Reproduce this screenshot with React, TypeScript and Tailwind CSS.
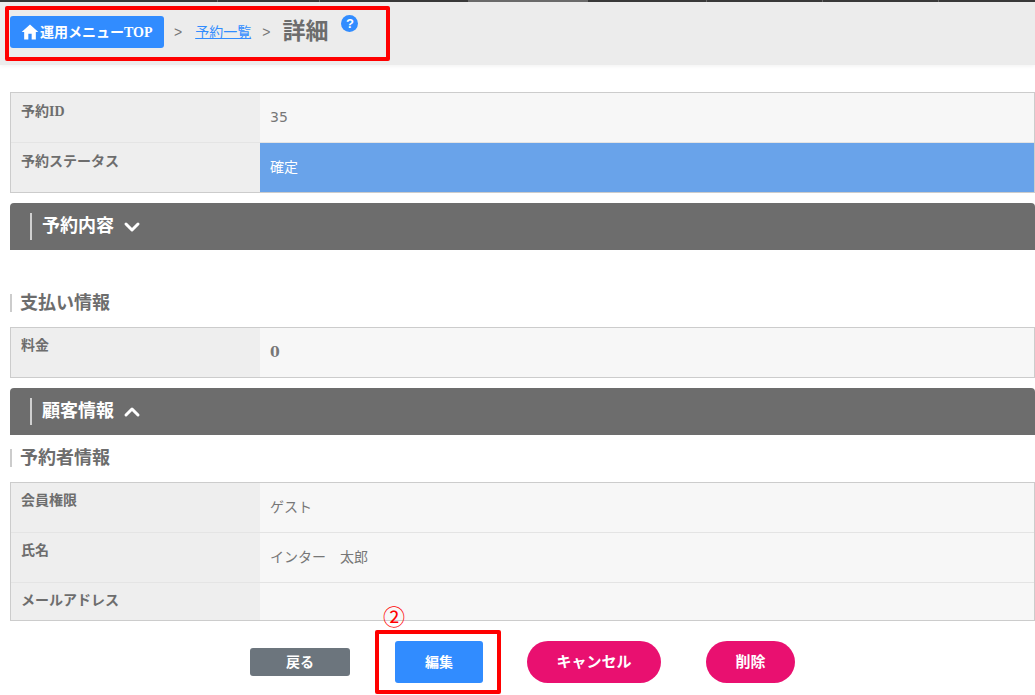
import { ChevronDown, ChevronUp } from 'lucide-react'

const jp = "font-['Liberation_Sans','Noto_Sans_CJK_JP',sans-serif]"
const serif = "font-['Liberation_Serif','Noto_Sans_CJK_JP',serif]"

function Row({ label, value, active, height = 'h-[50px]', bold, labelPad = 'pt-[8px]' }: { label: string; value?: string; active?: boolean; height?: string; bold?: boolean; labelPad?: string }) {
  return (
    <div className={`flex ${height} border-b border-[#e4e4e4] last:border-b-0`}>
      <div className={`w-[249px] shrink-0 bg-[#eeeeee] pl-[10px] ${labelPad} text-[14px] leading-[20px] font-bold text-[#6d6d6d] ${serif}`}>{label}</div>
      <div className={`flex-1 pl-[10px] pt-[14px] leading-[20px] ${active ? 'bg-[#69a3ea] text-white' : 'bg-[#f7f7f7] text-[#777777]'} ${bold ? "font-bold text-[14px] font-['DejaVu_Serif',serif]" : "text-[14px] font-['DejaVu_Sans','Noto_Sans_CJK_JP',sans-serif]"}`}>{value}</div>
    </div>
  )
}

function SectionBar({ title, open }: { title: string; open?: boolean }) {
  return (
    <div className="flex h-[47px] items-center rounded-t-[4px] bg-[#6d6d6d] pl-[20px]">
      <div className="flex h-[27px] items-center border-l-2 border-[#d0d0d0] pl-[10px] text-[18px] font-bold text-white">
        {title}
        {open ? <ChevronUp className="ml-[6px] h-[24px] w-[24px]" strokeWidth={3} /> : <ChevronDown className="ml-[6px] h-[24px] w-[24px]" strokeWidth={3} />}
      </div>
    </div>
  )
}

function SubTitle({ title }: { title: string }) {
  return <div className="border-l-2 border-[#cccccc] pl-[8px] text-[18px] leading-[18px] font-bold text-[#6d6d6d]">{title}</div>
}

export default function App() {
  return (
    <div className={`relative h-[695px] w-[1035px] overflow-hidden bg-white ${jp}`}>
      {/* sliver of the window strip above the page */}
      <div className="flex h-[2px] bg-[#3a3a3a]">
        <div className="w-[218px] border-r border-[#666666]" />
        <div className="w-[102px] border-r border-[#666666]" />
        <div className="w-[148px]" />
        <div className="w-[120px] bg-[#6a6a6a]" />
        <div className="w-[119px] border-r border-[#666666]" />
        <div className="w-[116px] border-r border-[#666666]" />
        <div className="w-[116px] border-r border-[#666666]" />
      </div>
      <div className="h-[63px] bg-[#ececec] pl-[10px] pt-[14px] shadow-[0_1px_4px_rgba(0,0,0,0.06)]">
        <div className="flex items-start">
          <div className={`flex h-[32px] w-[154px] items-center rounded-[3px] bg-[#318cff] pl-[10px] text-[14px] font-bold text-white ${serif}`}>
            <svg viewBox="0 0 24 24" className="h-[20px] w-[20px] fill-white"><path d="M10 21v-7h4v7h5v-9h3L12 3 2 12h3v9z" /></svg>
            運用メニューTOP
          </div>
          <span className="ml-[10px] mt-[7px] text-[14px] leading-[18px] text-[#777777]">&gt;</span>
          <a className="ml-[13px] mt-[7px] text-[14px] leading-[18px] text-[#318cff] underline">予約一覧</a>
          <span className="ml-[11px] mt-[7px] text-[14px] leading-[18px] text-[#777777]">&gt;</span>
          <span className="ml-[12px] mt-0 text-[23px] leading-[30px] font-bold text-[#6d6d6d]">詳細</span>
          <span className="ml-[13px] -mt-[1px] flex h-[17px] w-[17px] items-center justify-center rounded-full bg-[#318cff] text-[13px] font-bold text-white">?</span>
        </div>
      </div>

      <div className="pl-[10px] pt-[27px]">
        <div className="border border-[#cccccc]">
          <Row label="予約ID" value="35" labelPad="pt-[9px]" />
          <Row label="予約ステータス" value="確定" active height="h-[49px]" labelPad="pt-[9px]" />
        </div>
        <div className="mt-[10px]"><SectionBar title="予約内容" /></div>
        <div className="mt-[44px]"><SubTitle title="支払い情報" /></div>
        <div className="mt-[15px] border border-[#cccccc]">
          <Row label="料金" value="0" height="h-[49px]" bold />
        </div>
        <div className="mt-[10px]"><SectionBar title="顧客情報" open /></div>
        <div className="mt-[14px]"><SubTitle title="予約者情報" /></div>
        <div className="mt-[15px] border border-[#cccccc]">
          <Row label="会員権限" value="ゲスト" />
          <Row label="氏名" value="インター　太郎" />
          <Row label="メールアドレス" height="h-[37px]" />
        </div>
        <div className="mt-[20px] flex items-start pl-[240px]">
          <button className="mt-[7px] h-[28px] w-[100px] rounded-[3px] bg-[#6c757d] text-[14px] font-bold text-white">戻る</button>
          <button className="ml-[45px] h-[42px] w-[88px] rounded-[3px] bg-[#318cff] text-[14px] font-bold text-white">編集</button>
          <button className="ml-[44px] h-[42px] w-[134px] rounded-[21px] bg-[#e91070] text-[15px] font-bold text-white">キャンセル</button>
          <button className="ml-[45px] h-[42px] w-[89px] rounded-[21px] bg-[#e91070] text-[15px] font-bold text-white">削除</button>
        </div>
      </div>

      <div className="absolute left-[5px] top-[6px] h-[55px] w-[385px] rounded-[2px] border-[4px] border-[#ff0000]" />
      <div className="absolute left-[375px] top-[630px] h-[64px] w-[126px] rounded-[2px] border-[4px] border-[#ff0000]" />
      <span className="absolute left-[383px] top-[605px] text-[22px] leading-[26px] text-[#ff0000]">②</span>
    </div>
  )
}
